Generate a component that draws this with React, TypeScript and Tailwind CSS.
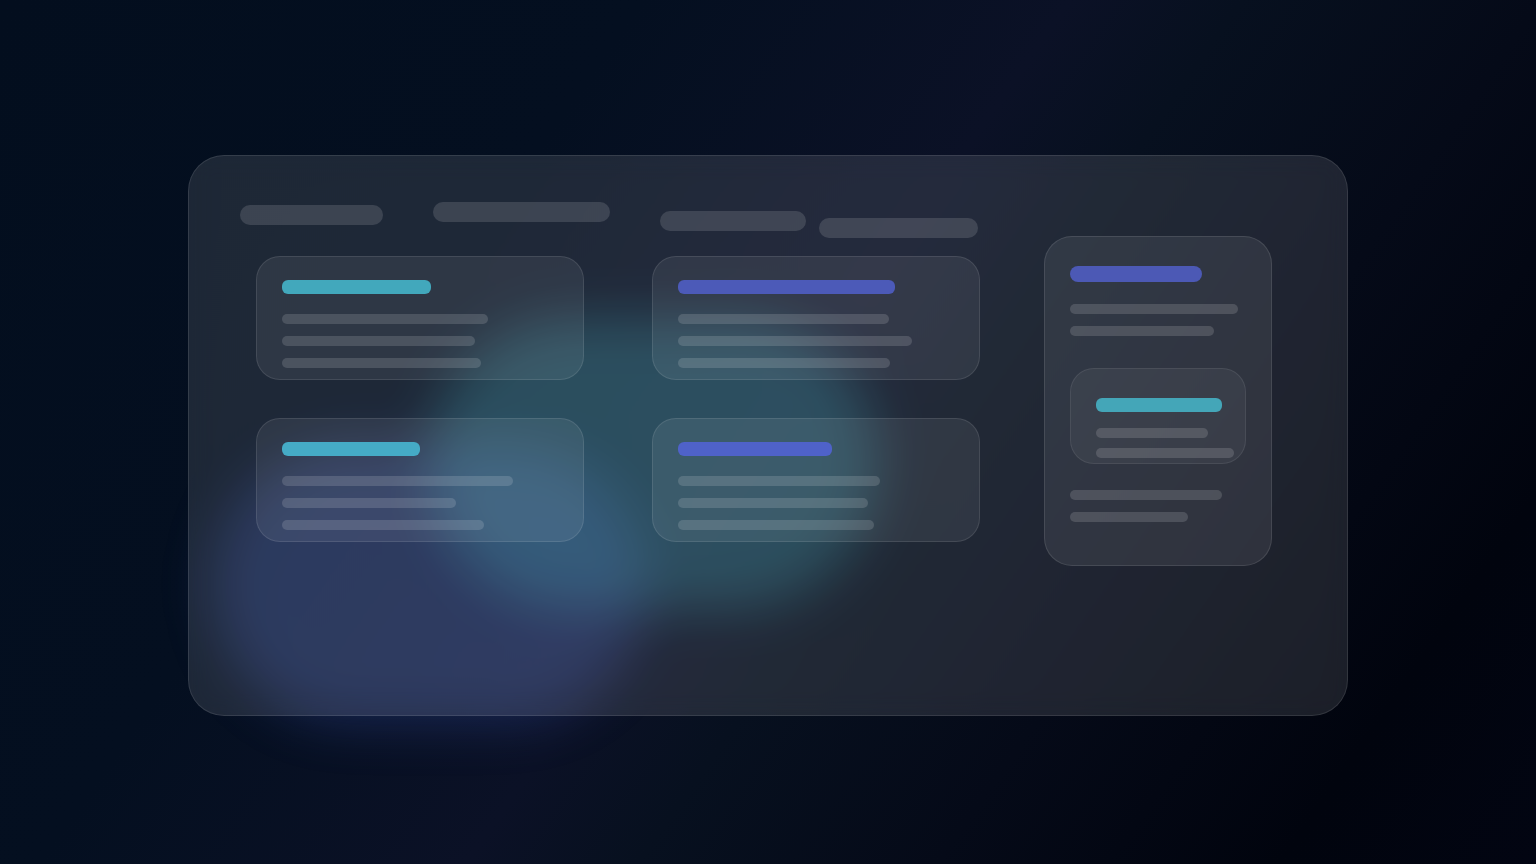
function Pill({ className }: { className: string }) {
  return <div className={`h-5 rounded-[10px] bg-white/[0.13] ${className}`} />;
}

function Line({ width, className = '' }: { width: number; className?: string }) {
  return <div className={`h-2.5 rounded-full bg-white/[0.14] ${className}`} style={{ width }} />;
}

function Card({ title, color, lines }: { title: number; color: string; lines: number[] }) {
  return (
    <div className="h-[124px] w-[328px] rounded-3xl border border-white/[0.1] bg-white/[0.07] pl-[25px] pt-[23px]">
      <div className={`h-3.5 rounded-md ${color}`} style={{ width: title }} />
      <div className="mt-5 flex flex-col gap-3">
        {lines.map((w, i) => (
          <Line key={i} width={w} />
        ))}
      </div>
    </div>
  );
}

export default function App() {
  return (
    <div className="relative flex h-screen w-full items-start justify-start overflow-hidden bg-[linear-gradient(125deg,#030e1e_0%,#040f20_30%,#0b1126_50%,#07101f_58%,#050a18_72%,#01040e_88%,#020512_100%)]">
      <div className="absolute left-[212px] top-[444px] h-[280px] w-[432px] rounded-full bg-[#3f5cc4]/[0.27] blur-[24px]" />
      <div className="absolute left-[428px] top-[318px] h-[290px] w-[450px] rounded-full bg-[#2f9aac]/[0.3] blur-[24px]" />

      <div className="relative ml-[188px] mt-[155px] flex h-[561px] w-[1160px] rounded-[36px] border border-white/[0.1] bg-white/[0.105] pl-[51px] pt-[46px] backdrop-blur-md">
        <div className="w-[740px]">
          <div className="flex h-9 items-start">
            <Pill className="mt-[3px] w-[143px]" />
            <Pill className="ml-[50px] w-[177px]" />
            <Pill className="ml-[50px] mt-[9px] w-[146px]" />
            <Pill className="ml-[13px] mt-4 w-[159px]" />
          </div>
          <div className="ml-4 mt-[18px] grid grid-cols-[328px_328px] gap-x-[68px] gap-y-[38px]">
            <Card title={149} color="bg-[#42a8bc]" lines={[206, 193, 199]} />
            <Card title={217} color="bg-[#4c5ab8]" lines={[211, 234, 212]} />
            <Card title={138} color="bg-[#45abc6]" lines={[231, 174, 202]} />
            <Card title={154} color="bg-[#4f62c9]" lines={[202, 190, 196]} />
          </div>
        </div>

        <div className="ml-16 mt-[34px] h-[330px] w-[228px] rounded-[28px] border border-white/[0.1] bg-white/[0.08] pl-[25px] pt-[29px]">
          <div className="h-4 w-[132px] rounded-lg bg-[#4c59b5]" />
          <div className="mt-[22px] flex flex-col gap-3">
            <Line width={168} />
            <Line width={144} />
          </div>
          <div className="mt-8 h-24 w-44 rounded-3xl border border-white/[0.08] bg-white/[0.05] pl-[25px] pt-[29px]">
            <div className="h-3.5 w-[126px] rounded-md bg-[#44a6b8]" />
            <div className="mt-4 flex flex-col gap-2.5">
              <Line width={112} />
              <Line width={138} />
            </div>
          </div>
          <div className="mt-[26px] flex flex-col gap-3">
            <Line width={152} />
            <Line width={118} />
          </div>
        </div>
      </div>
    </div>
  );
}
